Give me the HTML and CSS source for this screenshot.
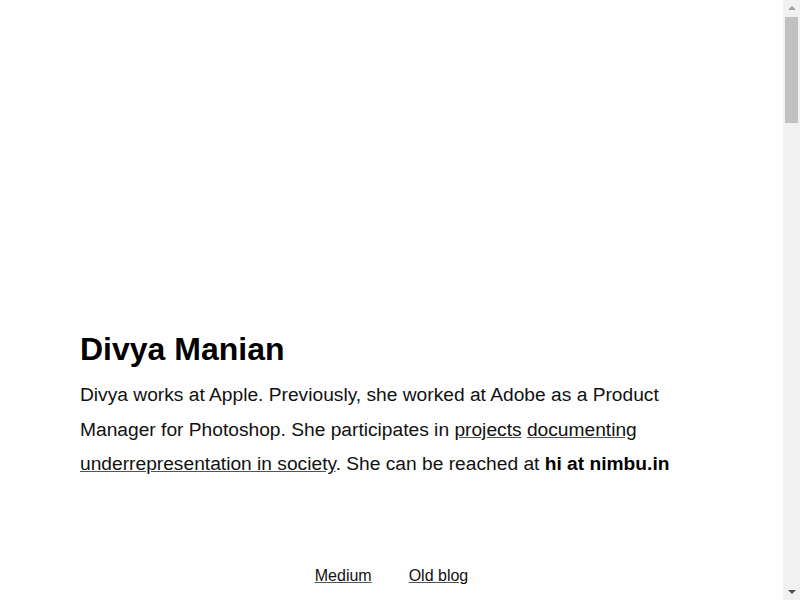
FILE: index.html
```html
<!DOCTYPE html>
<html lang="en">
<head>
  <meta charset="UTF-8">
  <title>Divya Manian</title>
  <link rel="stylesheet" href="styles.css">
</head>
<body>

  <section class="intro">
    <h1>Divya Manian</h1>
    <p>Divya works at Apple. Previously, she worked at Adobe as a Product Manager for Photoshop. She participates in <a href="#">projects</a> <a href="#">documenting underrepresentation in society</a>. She can be reached at <strong>hi at nimbu.in</strong></p>
  </section>

  <nav class="links">
    <a href="#">Medium</a>
    <a href="#">Old blog</a>
  </nav>

  <!-- rest of the page (work gallery) -->
  <section class="gallery"></section>

  <!-- window scrollbar, as seen in the screenshot -->
  <div class="scrollbar">
    <span class="arrow up"></span>
    <span class="thumb"></span>
    <span class="arrow down"></span>
  </div>

</body>
</html>
```

FILE: styles.css
```css
body {
  margin: 0 17px 0 0;
  background-color: #fff;
  color: #111;
  font-family: "Liberation Sans", Arial, sans-serif;
}

a {
  color: #111;
  text-decoration: underline;
  text-decoration-color: #555;
}

.intro {
  padding: 330px 80px 0;
  max-width: 620px;
}

.intro h1 {
  font-size: 32px;
  line-height: 1.2;
  margin: 0 0 10px;
  color: #000;
}

.intro p {
  font-size: 19.2px;
  line-height: 34.5px;
  margin: 0;
}

.intro strong {
  color: #000;
}

.links {
  display: flex;
  justify-content: center;
  gap: 37px;
  margin-top: 85px;
  font-size: 16px;
}

.gallery {
  height: 2600px;
}

.scrollbar {
  position: fixed;
  top: 0;
  right: 0;
  bottom: 0;
  width: 17px;
  background-color: #f1f1f1;
  display: flex;
  flex-direction: column;
  align-items: center;
}

.arrow {
  width: 0;
  height: 0;
  border-left: 4px solid transparent;
  border-right: 4px solid transparent;
}

.arrow.up {
  margin: 6px 0 5px;
  border-bottom: 4px solid #a3a3a3;
}

.arrow.down {
  margin: auto 0 6px;
  border-top: 4px solid #505050;
}

.thumb {
  width: 13px;
  height: 106px;
  margin-top: 2px;
  background-color: #c1c1c1;
}
```
